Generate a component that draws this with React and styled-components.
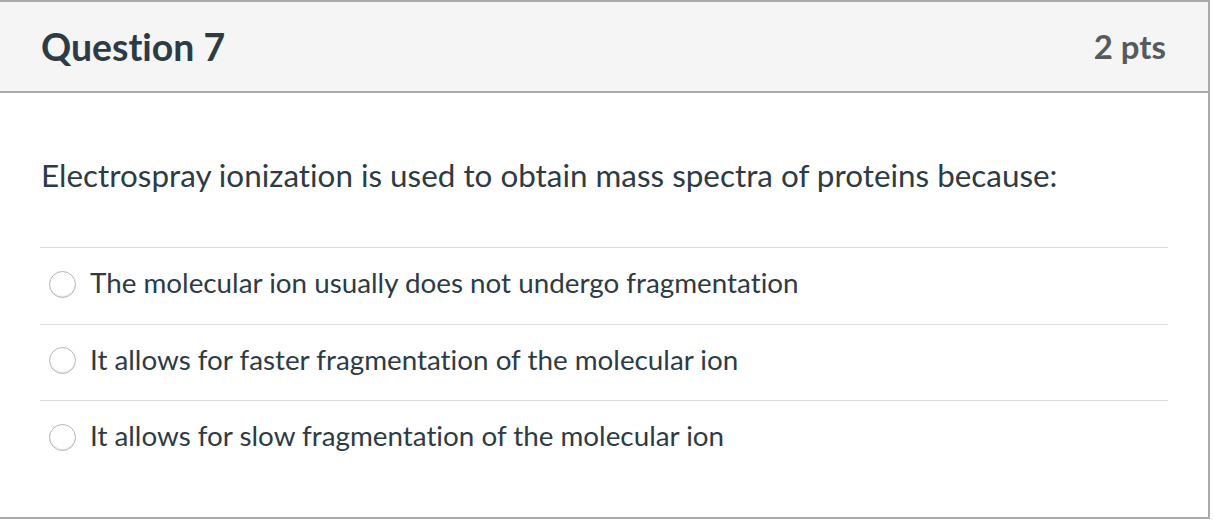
import React from "react";
import styled, { createGlobalStyle } from "styled-components";

const Global = createGlobalStyle`
  html, body { margin: 0; padding: 0; background: #fff; }
  body {
    font-family: Lato, "Noto Sans", sans-serif;
    font-variant-ligatures: none;
    font-feature-settings: "liga" 0, "clig" 0;
  }
`;

const Card = styled.div`
  width: 1208px;
  height: 515px;
  border: 2px solid #aaaaaa;
  border-left: none;
  background: #fff;
  display: flex;
  flex-direction: column;
`;

const Header = styled.div`
  height: 89px;
  background: #f5f5f5;
  border-bottom: 2px solid #aaaaaa;
  display: flex;
  align-items: center;
  justify-content: space-between;
  padding: 0 42px 0 41px;
`;

const Title = styled.h2`
  margin: 0;
  font-family: Lato, sans-serif;
  font-weight: 700;
  font-size: 37.4px;
  color: #2d3b45;
`;

const Points = styled.span`
  font-family: Lato, sans-serif;
  font-weight: 700;
  font-size: 32.9px;
  color: #555a5e;
`;

const Body = styled.div`
  padding: 0 40px;
  display: flex;
  flex-direction: column;
`;

const Prompt = styled.p`
  margin: 0;
  padding: 62px 1px 0;
  height: 92px;
  font-size: 31.4px;
  line-height: 40px;
  color: #2d3b45;
`;

const Option = styled.label`
  display: flex;
  align-items: center;
  gap: 14px;
  height: 76.5px;
  border-top: 1.5px solid #dddddd;
  padding-left: 9px;
  padding-bottom: 6px;
  box-sizing: border-box;
  font-size: 27.8px;
  color: #2d3b45;
`;

const Radio = styled.span`
  width: 25px;
  height: 25px;
  margin-top: 3px;
  border-radius: 50%;
  border: 1px solid #b5b5b5;
  background: radial-gradient(circle at 50% 35%, #ffffff 60%, #f0f0f0 100%);
  box-shadow: inset 0 -1px 1px rgba(0,0,0,0.08);
  flex: none;
`;

const options = [
  "The molecular ion usually does not undergo fragmentation",
  "It allows for faster fragmentation of the molecular ion",
  "It allows for slow fragmentation of the molecular ion",
];

export default function App() {
  return (
    <>
      <Global />
      <Card>
        <Header>
          <Title>Question 7</Title>
          <Points>2 pts</Points>
        </Header>
        <Body>
          <Prompt>Electrospray ionization is used to obtain mass spectra of proteins because:</Prompt>
          {options.map((o) => (
            <Option key={o}>
              <Radio />
              {o}
            </Option>
          ))}
        </Body>
      </Card>
    </>
  );
}
